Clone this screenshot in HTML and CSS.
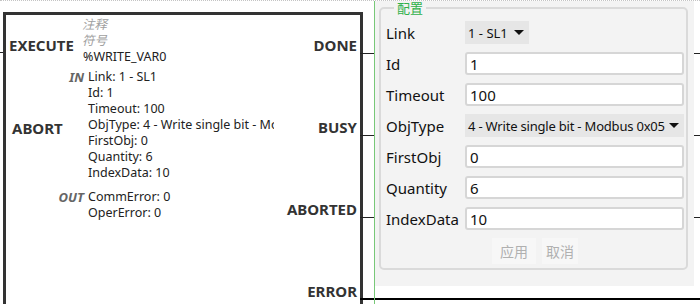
FILE: index.html
```html
<!DOCTYPE html>
<html lang="zh">
<head>
    <meta charset="UTF-8">
    <title>WRITE_VAR</title>
    <link rel="stylesheet" href="styles.css">
</head>
<body>

    <div class="canvas">
        <!-- 功能块 -->
        <div class="fb">
            <div class="pins pins-in">
                <div class="pin pin-execute">EXECUTE</div>
                <div class="pin pin-abort">ABORT</div>
            </div>

            <div class="info">
                <div class="note">注释</div>
                <div class="note">符号</div>
                <div class="inst">%WRITE_VAR0</div>

                <div class="group group-in">
                    <div class="row"><span class="tag">IN</span><span class="val">Link: 1 - SL1</span></div>
                    <div class="row"><span class="tag"></span><span class="val">Id: 1</span></div>
                    <div class="row"><span class="tag"></span><span class="val">Timeout: 100</span></div>
                    <div class="row"><span class="tag"></span><span class="val">ObjType: 4 - Write single bit - Modbus 0x05</span></div>
                    <div class="row"><span class="tag"></span><span class="val">FirstObj: 0</span></div>
                    <div class="row"><span class="tag"></span><span class="val">Quantity: 6</span></div>
                    <div class="row"><span class="tag"></span><span class="val">IndexData: 10</span></div>
                </div>

                <div class="group group-out">
                    <div class="row"><span class="tag">OUT</span><span class="val">CommError: 0</span></div>
                    <div class="row"><span class="tag"></span><span class="val">OperError: 0</span></div>
                </div>
            </div>

            <div class="pins pins-out">
                <div class="pin">DONE</div>
                <div class="pin">BUSY</div>
                <div class="pin">ABORTED</div>
                <div class="pin pin-error">ERROR</div>
            </div>
        </div>

        <!-- 配置面板 -->
        <div class="side">
            <div class="panel">
                <fieldset class="config">
                    <legend>配置</legend>
                    <div class="form">
                        <label>Link</label>
                        <div class="select select-short">1 - SL1 <svg class="caret" width="10" height="5" viewBox="0 0 10 5"><polygon points="0,0 10,0 5,5" fill="#111"/></svg></div>

                        <label>Id</label>
                        <input type="text" value="1">

                        <label>Timeout</label>
                        <input type="text" value="100">

                        <label>ObjType</label>
                        <div class="select select-long">4 - Write single bit - Modbus 0x05 <svg class="caret" width="10" height="5" viewBox="0 0 10 5"><polygon points="0,0 10,0 5,5" fill="#111"/></svg></div>

                        <label>FirstObj</label>
                        <input type="text" value="0">

                        <label>Quantity</label>
                        <input type="text" value="6">

                        <label>IndexData</label>
                        <input type="text" value="10">
                    </div>
                    <div class="buttons">
                        <button class="btn btn-apply">应用</button>
                        <button class="btn btn-cancel">取消</button>
                    </div>
                </fieldset>
            </div>
        </div>
    </div>

</body>
</html>
```

FILE: styles.css
```css
body {
    margin: 0;
    width: 700px;
    height: 304px;
    overflow: hidden;
    background: white;
    font-family: "Noto Sans", "Noto Sans CJK SC", sans-serif;
    color: #1a1a1a;
}
.canvas {
    position: relative;
    height: 304px;
    overflow: hidden;
    border-top: 1px dotted #c4c4c4;
    box-sizing: border-box;
}
.fb {
    display: flex;
    width: 360px;
    height: 400px;
    margin: 11px 0 0 3px;
    border: 3px solid #333;
    border-bottom: none;
    box-sizing: border-box;
}
.pins {
    padding-top: 22px;
}
.pin {
    position: relative;
    font-size: 15px;
    font-weight: bold;
    line-height: 16px;
    color: #333;
    white-space: nowrap;
}
.pin + .pin {
    margin-top: 66px;
}
.pins-in {
    width: 50px;
    flex: none;
}
.pins-in .pin {
    padding-left: 3px;
}
.pins-in .pin-abort {
    margin-top: 67px;
    padding-left: 6px;
}
.pin-execute::before {
    content: "";
    position: absolute;
    left: -6px;
    top: 15px;
    width: 3px;
    height: 1px;
    background: #222;
}
.pins-out {
    flex: 1;
    text-align: right;
    padding-right: 3px;
}
.pins-out .pin::after {
    content: "";
    position: absolute;
    left: calc(100% + 3px);
    top: 16px;
    width: 400px;
    height: 1px;
    background: #222;
}
.pins-out .pin-error::after {
    top: 15px;
    height: 2px;
    background: #000;
}
.info {
    width: 218px;
    flex: none;
    overflow: hidden;
    padding-top: 2px;
    font-size: 12.5px;
    line-height: 16px;
    white-space: nowrap;
}
.note {
    padding-left: 26px;
    font-style: italic;
    color: #a0a0a0;
}
.inst {
    padding-left: 27px;
    color: #222;
}
.group-in {
    margin-top: 4px;
}
.group-out {
    margin-top: 8px;
}
.row {
    display: flex;
    gap: 4px;
}
.tag {
    width: 28px;
    flex: none;
    text-align: right;
    font-weight: bold;
    font-style: italic;
    font-size: 13px;
    color: #666;
}
.val {
    color: #222;
}

/* 配置面板 */
.side {
    position: absolute;
    left: 374px;
    top: 0;
    bottom: 0;
    width: 326px;
    border-left: 1px solid #78c878;
}
.panel {
    width: 319px;
    padding: 0 6px 16px 4px;
    box-sizing: border-box;
    background: #f3f3f3;
}
.config {
    min-width: 0;
    margin: 0;
    padding: 6px 2px 4px 5px;
    border: 2px solid #dadada;
    border-radius: 5px;
}
.config legend {
    margin-left: 8px;
    padding: 0 3px;
    font-size: 13px;
    line-height: 14px;
    color: #2fb04a;
}
.form {
    display: grid;
    grid-template-columns: 79px minmax(0, 1fr);
    grid-auto-rows: 23px;
    row-gap: 8px;
    align-items: center;
}
.form label {
    font-size: 15px;
    line-height: 18px;
    padding-top: 1px;
    color: #111;
}
.form input {
    height: 23px;
    width: 100%;
    box-sizing: border-box;
    margin: 0;
    padding: 0 3px;
    border: 2px solid #d6d6d6;
    border-radius: 3px;
    background: white;
    font-family: inherit;
    font-size: 15px;
    color: #111;
    outline: none;
}
.select {
    display: flex;
    align-items: center;
    justify-content: space-between;
    height: 23px;
    padding: 0 5px 0 3px;
    overflow: hidden;
    background: #e6e6e6;
    font-size: 13px;
    color: #111;
    white-space: nowrap;
}
.select-short {
    justify-self: start;
    gap: 6px;
}
.select-long {
    letter-spacing: -0.2px;
}
.caret {
    flex: none;
}
.buttons {
    display: flex;
    justify-content: center;
    gap: 6px;
    margin-top: 8px;
}
.btn {
    height: 26px;
    border: none;
    background: #f7f7f7;
    font-family: "Noto Sans CJK SC", sans-serif;
    font-size: 14px;
    color: #b0b0b0;
}
.btn-apply {
    padding: 0 8px;
}
.btn-cancel {
    padding: 0 4px;
}
```
